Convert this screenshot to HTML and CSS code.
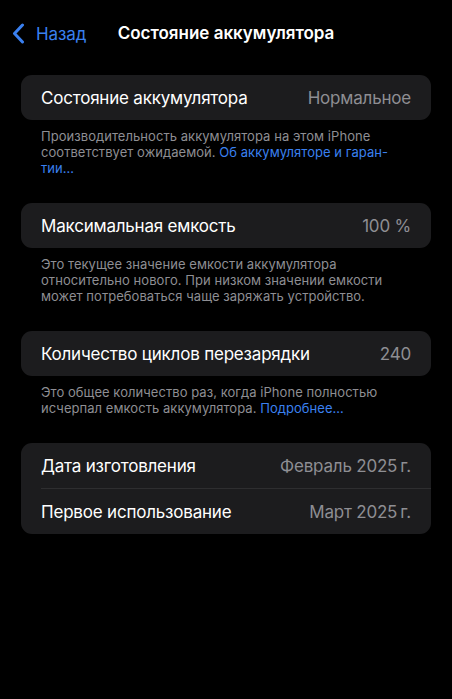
FILE: index.html
```html
<!DOCTYPE html>
<html lang="ru">

<head>
  <meta charset="UTF-8">
  <meta name="viewport" content="width=device-width, initial-scale=1.0">
  <title>Состояние аккумулятора</title>
  <link rel="stylesheet" href="styles.css">
</head>

<body>
  <header class="navbar">
    <a class="back" href="#">
      <svg class="chevron" width="13" height="21" viewBox="0 0 13 21">
        <path d="M10.5 2 L2.5 10.5 L10.5 19" fill="none" stroke="currentColor" stroke-width="3" stroke-linecap="round" stroke-linejoin="round" />
      </svg>
      <span>Назад</span>
    </a>
    <h1 class="title">Состояние аккумулятора</h1>
  </header>

  <main class="settings">
    <section class="group">
      <div class="card">
        <div class="row">
          <span class="label">Состояние аккумулятора</span>
          <span class="value">Нормальное</span>
        </div>
      </div>
      <p class="footnote">Производительность аккумулятора на этом iPhone соответствует ожидаемой. <a href="#">Об аккумуляторе и гаран-<br>тии…</a></p>
    </section>

    <section class="group">
      <div class="card">
        <div class="row">
          <span class="label">Максимальная емкость</span>
          <span class="value">100 %</span>
        </div>
      </div>
      <p class="footnote">Это текущее значение емкости аккумулятора<br>относительно нового. При низком значении емкости может потребоваться чаще заряжать устройство.</p>
    </section>

    <section class="group">
      <div class="card">
        <div class="row">
          <span class="label">Количество циклов перезарядки</span>
          <span class="value">240</span>
        </div>
      </div>
      <p class="footnote">Это общее количество раз, когда iPhone полностью исчерпал емкость аккумулятора. <a href="#">Подробнее…</a></p>
    </section>

    <section class="group">
      <div class="card">
        <div class="row">
          <span class="label">Дата изготовления</span>
          <span class="value">Февраль 2025&#8201;г.</span>
        </div>
        <div class="row">
          <span class="label">Первое использование</span>
          <span class="value">Март 2025&#8201;г.</span>
        </div>
      </div>
    </section>
  </main>
</body>

</html>
```

FILE: styles.css
```css
:root {
  color-scheme: dark;
  font-family: Inter, "Noto Sans", sans-serif;
  --blue: #3a80f0;
  --grey: #8e8e93;
}

body {
  margin: 0;
  background: #000;
  color: #fff;
  min-height: 699px;
}

a {
  color: var(--blue);
  text-decoration: none;
}

.navbar {
  position: relative;
  height: 66px;
  display: flex;
  align-items: center;
  justify-content: center;
}

.back {
  position: absolute;
  left: 12px;
  top: 23px;
  display: flex;
  align-items: center;
  gap: 11px;
  font-size: 17px;
  letter-spacing: -0.1px;
}

.chevron {
  display: block;
}

.title {
  margin: 0;
  font-size: 17px;
  font-weight: 600;
}

.settings {
  padding: 9px 21px 0;
  display: flex;
  flex-direction: column;
}

.card {
  background: #1c1c1e;
  border-radius: 11px;
}

.row {
  height: 45px;
  display: flex;
  align-items: center;
  justify-content: space-between;
  padding: 0 20px;
  font-size: 17px;
  letter-spacing: -0.2px;
}

.row + .row {
  border-top: 1px solid #2e2e30;
  margin-left: 20px;
  padding-left: 0;
}

.value {
  color: var(--grey);
}

.footnote {
  margin: 0;
  padding: 8px 20px 27px;
  font-size: 13px;
  line-height: 16px;
  color: var(--grey);
  letter-spacing: 0.05px;
}
```
